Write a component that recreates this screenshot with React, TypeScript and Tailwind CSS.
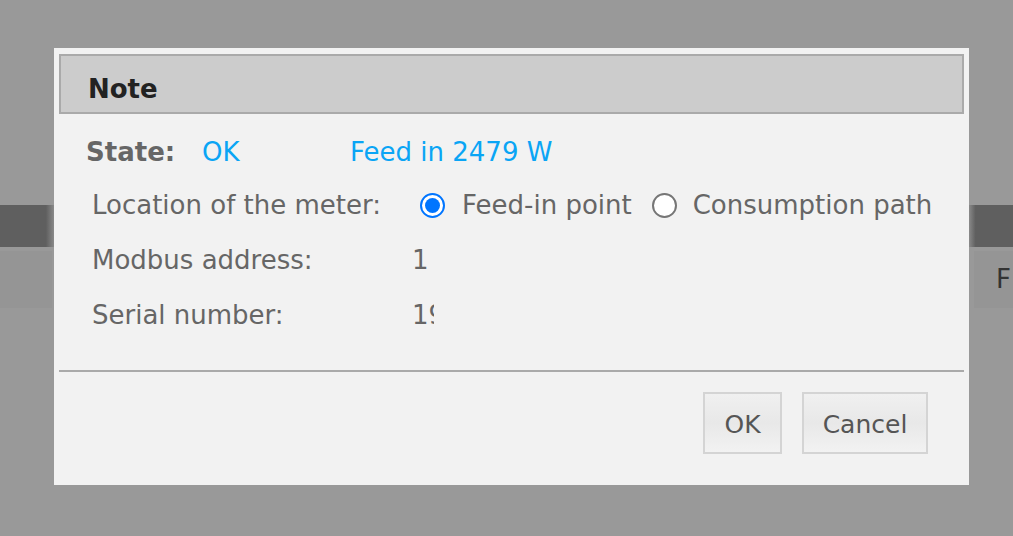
import React from 'react';

function Radio({ checked }: { checked: boolean }) {
  return checked ? (
    <span className="inline-block h-[25px] w-[25px] shrink-0 rounded-full border-[2px] border-[#0075ff] bg-white p-[3px]">
      <span className="block h-full w-full rounded-full bg-[#0075ff]" />
    </span>
  ) : (
    <span className="inline-block h-[25px] w-[25px] shrink-0 rounded-full border-[2px] border-[#767676] bg-white" />
  );
}

export default function App() {
  return (
    <div className="relative h-[536px] w-full overflow-hidden bg-[#999999] font-[family-name:DejaVu_Sans,sans-serif]">
      {/* page behind the overlay */}
      <div className="pt-[205px]">
        <div className="flex h-[42px] justify-between">
          <div className="w-[54px] bg-gradient-to-r from-[#5f5f5f] from-85% to-[#8a8a8a]" />
          <div className="w-[44px] bg-gradient-to-l from-[#5f5f5f] from-85% to-[#8a8a8a]" />
        </div>
        <div className="mt-[4px] flex h-[57px] items-center justify-between text-[26px] text-[#333]">
          <div className="h-full w-[52px] bg-[#959595]" />
          <div className="flex h-full w-[39px] items-center overflow-hidden bg-[#959595] pl-[22px]">F</div>
        </div>
      </div>

      {/* dialog */}
      <div className="absolute left-[54px] top-[48px] flex h-[437px] w-[915px] flex-col bg-[#f2f2f2] px-[5px] pt-[6px]">
        <div className="flex h-[60px] items-center border-[2px] border-[#aaaaaa] bg-[#cccccc] pl-[27px] pt-[10px] text-[26px] font-bold text-[#222]">
          Note
        </div>

        <div className="flex flex-col px-[27px] pt-[22px] text-[26px] text-[#666]">
          <div className="flex h-[32px] items-center">
            <span className="w-[116px] font-bold">State:</span>
            <span className="w-[148px] text-[#0aa5f5]">OK</span>
            <span className="text-[#0aa5f5]">Feed in 2479 W</span>
          </div>
          <div className="mt-[21px] flex h-[32px] items-center whitespace-nowrap pl-[6px]">
            <span className="w-[328px] shrink-0">Location of the meter:</span>
            <label className="flex items-center">
              <Radio checked />
              <span className="ml-[17px]">Feed-in point</span>
            </label>
            <label className="ml-[20px] flex items-center">
              <Radio checked={false} />
              <span className="ml-[16px]">Consumption path</span>
            </label>
          </div>
          <div className="mt-[23px] flex h-[32px] items-center pl-[6px]">
            <span className="w-[320px]">Modbus address:</span>
            <span className="w-[22px] overflow-hidden whitespace-nowrap">1</span>
          </div>
          <div className="mt-[23px] flex h-[32px] items-center pl-[6px]">
            <span className="w-[320px]">Serial number:</span>
            <span className="w-[22px] overflow-hidden whitespace-nowrap">19</span>
          </div>
        </div>

        <div className="mt-[39px] h-[2px] bg-[#aaaaaa]" />

        <div className="flex justify-end gap-[20px] pr-[36px] pt-[20px]">
          <button className="h-[62px] w-[79px] border-[2px] border-[#d4d4d4] bg-gradient-to-b from-[#f0f0f0] via-[#e8e8e8] to-[#f2f2f2] pt-[4px] text-[25px] text-[#555]">
            OK
          </button>
          <button className="h-[62px] w-[126px] border-[2px] border-[#d4d4d4] bg-gradient-to-b from-[#f0f0f0] via-[#e8e8e8] to-[#f2f2f2] pt-[4px] text-[25px] text-[#555]">
            Cancel
          </button>
        </div>
      </div>
    </div>
  );
}
